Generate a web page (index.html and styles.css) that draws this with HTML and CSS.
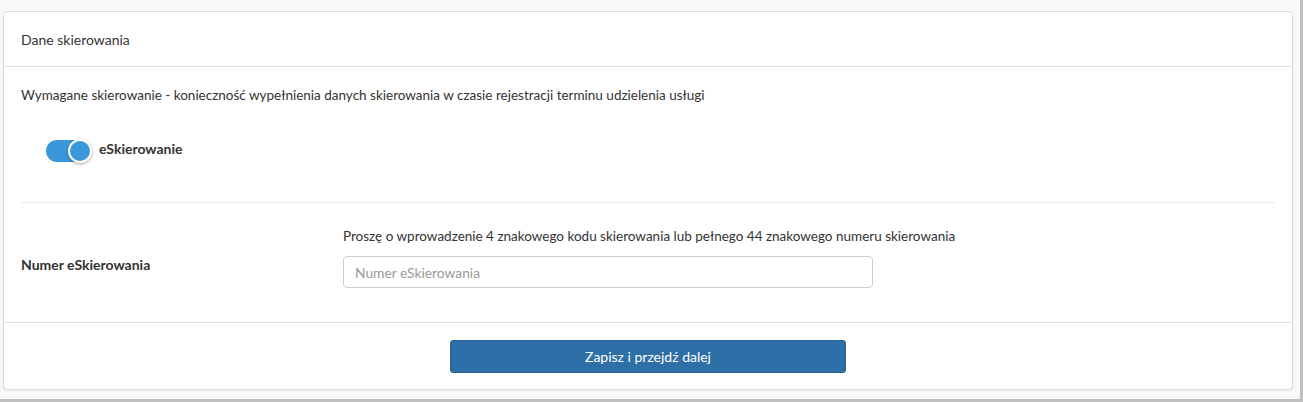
FILE: index.html
```html
<!DOCTYPE html>
<html lang="pl">
<head>
<meta charset="utf-8">
<title>Dane skierowania</title>
<link rel="stylesheet" href="styles.css">
</head>
<body>
<div class="frame">
  <div class="card">
    <div class="card-header">Dane skierowania</div>
    <div class="card-body">
      <p class="info">Wymagane skierowanie - konieczność wypełnienia danych skierowania w czasie rejestracji terminu udzielenia usługi</p>
      <div class="toggle-row">
        <span class="toggle"><span class="knob"></span></span>
        <span class="toggle-label">eSkierowanie</span>
      </div>
      <div class="field-row">
        <div class="field-label">Numer eSkierowania</div>
        <div class="field-main">
          <div class="help">Proszę o wprowadzenie 4 znakowego kodu skierowania lub pełnego 44 znakowego numeru skierowania</div>
          <input class="input" type="text" placeholder="Numer eSkierowania">
        </div>
      </div>
    </div>
    <div class="card-footer">
      <button class="btn" type="button">Zapisz i przejdź dalej</button>
    </div>
  </div>
</div>
</body>
</html>
```

FILE: styles.css
```css
html, body {
  margin: 0;
  padding: 0;
}
body {
  background: #f8f8f8;
  font-family: Lato, "Open Sans", Arial, sans-serif;
  font-size: 13.5px;
  color: #333;
  overflow: hidden;
}
.frame {
  width: 1303px;
  height: 402px;
  border-right: 3px solid #c0c0c0;
  border-bottom: 3px solid #c0c0c0;
  padding: 11px 0 0 3px;
  box-sizing: border-box;
}
.card {
  width: 1290px;
  box-sizing: border-box;
  background: #fff;
  border: 1px solid #dcdcdc;
  border-radius: 4px;
  box-shadow: 0 1px 2px rgba(0,0,0,0.06);
}
.card-header {
  height: 55px;
  box-sizing: border-box;
  padding: 0 17px;
  display: flex;
  align-items: center;
  border-bottom: 1px solid #dedede;
  font-size: 14px;
}
.card-body {
  padding: 19px 17px 0;
}
.info {
  margin: 0;
  line-height: 18px;
}
.toggle-row {
  display: flex;
  align-items: flex-start;
  height: 99px;
  box-sizing: border-box;
  padding: 36px 0 0 25px;
  border-bottom: 1px solid #ececec;
}
.toggle {
  position: relative;
  width: 45px;
  height: 22px;
  border-radius: 11px;
  background: #3a97d9;
  flex: none;
}
.knob {
  position: absolute;
  right: -1px;
  top: -1px;
  width: 20px;
  height: 20px;
  border-radius: 50%;
  background: #3a97d9;
  border: 2px solid #fff;
  box-shadow: 0 1px 3px rgba(0,0,0,0.35);
}
.toggle-label {
  font-weight: 700;
  font-size: 14px;
  margin-left: 8px;
  line-height: 18px;
}
.field-row {
  display: grid;
  grid-template-columns: 322px 1fr;
  align-items: center;
  height: 119px;
  padding-bottom: 11px;
  box-sizing: border-box;
}
.field-label {
  font-weight: 700;
  font-size: 14px;
  padding-top: 15px;
}
.field-main {
  display: flex;
  flex-direction: column;
  align-items: flex-start;
  padding-top: 1px;
}
.help {
  line-height: 18px;
  margin-bottom: 11px;
}
.input {
  width: 530px;
  height: 32px;
  box-sizing: border-box;
  border: 1px solid #ccc;
  border-radius: 4px;
  padding: 0 11px;
  font-family: inherit;
  font-size: 13.8px;
  color: #333;
}
.input::placeholder {
  color: #999;
}
.card-footer {
  border-top: 1px solid #dedede;
  display: flex;
  justify-content: center;
  padding: 17px 0 16px;
}
.btn {
  width: 396px;
  height: 33px;
  background: #2f6fa7;
  color: #fff;
  border: 1px solid #2a6496;
  border-radius: 3px;
  font-family: inherit;
  font-size: 14px;
}
```
